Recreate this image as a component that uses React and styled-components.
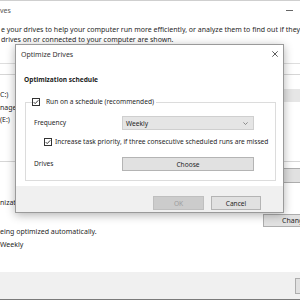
import React from "react"
import styled, { createGlobalStyle } from "styled-components"

const GlobalStyle = createGlobalStyle`
  html, body {
    margin: 0;
    padding: 0;
  }
  body {
    width: 300px;
    height: 300px;
    overflow: hidden;
    background: #fff;
    font-family: "Noto Sans", "Open Sans", sans-serif;
    font-size: 7px;
    color: #1f1f1f;
  }
`

const Screen = styled.div`
  position: relative;
  width: 300px;
  height: 300px;
  overflow: hidden;
`

/* background window */
const Window = styled.div`
  display: flex;
  flex-direction: column;
  height: 300px;
  box-sizing: border-box;
  border-top: 1px solid #cfcfcf;
`
const TitleBar = styled.div`
  height: 19px;
  display: flex;
  align-items: center;
  justify-content: space-between;
  color: #555;
`
const Minimize = styled.span`
  width: 7px;
  height: 1px;
  background: #666;
  margin-right: 7px;
`
const Desc = styled.div`
  padding: 5px 0 0 1px;
  line-height: 10px;
  white-space: nowrap;
  overflow: hidden;
`
const List = styled.div`
  margin-top: 18px;
  height: 99px;
  box-sizing: border-box;
  border-bottom: 1px solid #d6d6d6;
`
const ListHeader = styled.div`
  height: 10px;
  border-top: 1px solid #dedede;
  border-bottom: 1px solid #d6d6d6;
`
const ListBody = styled.div`
  padding-top: 14px;
`
const ListRow = styled.div`
  height: 12.5px;
  line-height: 12.5px;
  display: flex;
  justify-content: space-between;
`
const StatusCell = styled.span`
  width: 20px;
  background: ${(p) => (p.$busy ? "#e6e6e6" : "transparent")};
`
const ActionRow = styled.div`
  margin-top: 6px;
  display: flex;
  justify-content: flex-end;
`
const WinButton = styled.div`
  height: ${(p) => p.$h || 15}px;
  width: ${(p) => p.$w}px;
  box-sizing: border-box;
  background: #e1e1e1;
  border: 1px solid #adadad;
  border-right: none;
  display: flex;
  align-items: center;
  padding-left: ${(p) => p.$pad || 4}px;
  overflow: hidden;
  white-space: nowrap;
  color: #1f1f1f;
`
const SectionLabel = styled.div`
  margin-top: 15px;
  line-height: 10px;
`
const ScheduleRow = styled.div`
  margin-top: 6px;
  display: flex;
  justify-content: flex-end;
`
const InfoLine = styled.div`
  line-height: 10px;
  margin-top: ${(p) => p.$gap || 0}px;
`
const Footer = styled.div`
  margin-top: auto;
  height: 28px;
  box-sizing: border-box;
  background: #f0f0f0;
  border-bottom: 1px solid #7a7a7a;
  display: flex;
  justify-content: flex-end;
  align-items: center;
`

/* dialog */
const Dialog = styled.div`
  position: absolute;
  left: 15px;
  top: 44px;
  width: 269px;
  height: 169px;
  box-sizing: border-box;
  background: #fff;
  border: 1px solid #9a9a9a;
  box-shadow: 0 2px 9px rgba(0, 0, 0, 0.3);
  display: flex;
  flex-direction: column;
  font-size: 6.6px;
`
const DialogTitle = styled.div`
  height: 18px;
  display: flex;
  align-items: center;
  justify-content: space-between;
  padding: 0 5px 0 5px;
  color: #333;
  font-size: 7px;
`
const DialogBody = styled.div`
  padding: 12px 0 0 8px;
`
const Heading = styled.div`
  font-weight: bold;
  line-height: 10px;
`
const Group = styled.fieldset`
  margin: 12px 0 0 1px;
  width: 251px;
  box-sizing: border-box;
  border: 1px solid #dcdcdc;
  padding: 0 0 9px 8px;
`
const Legend = styled.legend`
  margin-left: -2px;
  padding: 0 2px 0 0;
  line-height: 10px;
  display: flex;
  align-items: center;
  gap: 6px;
  white-space: nowrap;
`
const Grid = styled.div`
  margin-top: 9px;
  display: grid;
  grid-template-columns: 88px 132px;
  align-items: center;
`
const Label = styled.span`
  line-height: 10px;
`
const Select = styled.div`
  height: 14px;
  box-sizing: border-box;
  background: #e5e5e5;
  border: 1px solid #cfcfcf;
  display: flex;
  align-items: center;
  justify-content: space-between;
  padding: 0 5px 0 3px;
`
const PriorityRow = styled.div`
  grid-column: 1 / -1;
  margin: 7px 0 10px 10px;
  line-height: 10px;
  display: flex;
  align-items: center;
  gap: 3px;
  white-space: nowrap;
`
const Button = styled.div`
  height: 14px;
  box-sizing: border-box;
  background: ${(p) => (p.$disabled ? "#cccccc" : "#e1e1e1")};
  border: 1px solid ${(p) => (p.$disabled ? "#bfbfbf" : "#b4b4b4")};
  color: ${(p) => (p.$disabled ? "#9c9c9c" : "#1f1f1f")};
  width: ${(p) => (p.$w ? p.$w + "px" : "auto")};
  display: flex;
  align-items: center;
  justify-content: center;
`
const DialogFooter = styled.div`
  margin-top: auto;
  height: 26px;
  background: #f0f0f0;
  display: flex;
  justify-content: flex-end;
  align-items: flex-end;
  gap: 7px;
  padding: 0 22px 2px 0;
  box-sizing: border-box;
`
const BoxIcon = styled.svg`
  flex-shrink: 0;
  display: block;
`

const CheckBox = () => (
  <BoxIcon width="8" height="8" viewBox="0 0 8 8">
    <rect x="0.5" y="0.5" width="7" height="7" fill="#fff" stroke="#333" />
    <path d="M1.7 4.1 L3.2 5.6 L6.3 2.3" fill="none" stroke="#222" strokeWidth="0.9" />
  </BoxIcon>
)

const CloseIcon = () => (
  <svg width="6" height="6" viewBox="0 0 6 6">
    <path d="M0.3 0.3 L5.7 5.7 M5.7 0.3 L0.3 5.7" stroke="#333" strokeWidth="0.8" />
  </svg>
)

const Chevron = () => (
  <svg width="5" height="3" viewBox="0 0 5 3">
    <path d="M0.4 0.4 L2.5 2.5 L4.6 0.4" fill="none" stroke="#666" strokeWidth="0.7" />
  </svg>
)

export default function App() {
  return (
    <Screen>
      <GlobalStyle />
      <Window>
        <TitleBar>
          <span>ves</span>
          <Minimize />
        </TitleBar>
        <Desc>
          <div>e your drives to help your computer run more efficiently, or analyze them to find out if they need</div>
          <div>drives on or connected to your computer are shown.</div>
        </Desc>
        <List>
          <ListHeader />
          <ListBody>
            <ListRow>
              <span>C:)</span>
              <StatusCell $busy />
            </ListRow>
            <ListRow>
              <span>nage</span>
              <StatusCell />
            </ListRow>
            <ListRow>
              <span>(E:)</span>
              <StatusCell />
            </ListRow>
          </ListBody>
        </List>
        <ActionRow>
          <WinButton $w={30} />
        </ActionRow>
        <SectionLabel>nizati</SectionLabel>
        <ScheduleRow>
          <WinButton $w={37} $h={13} $pad={18}>Chang</WinButton>
        </ScheduleRow>
        <InfoLine $gap={0}>eing optimized automatically.</InfoLine>
        <InfoLine $gap={3}>Weekly</InfoLine>
        <Footer>
          <WinButton $w={2} $h={16} />
        </Footer>
      </Window>

      <Dialog>
        <DialogTitle>
          <span>Optimize Drives</span>
          <CloseIcon />
        </DialogTitle>
        <DialogBody>
          <Heading>Optimization schedule</Heading>
          <Group>
            <Legend>
              <CheckBox />
              Run on a schedule (recommended)
            </Legend>
            <Grid>
              <Label>Frequency</Label>
              <Select>
                <span>Weekly</span>
                <Chevron />
              </Select>
              <PriorityRow>
                <CheckBox />
                Increase task priority, if three consecutive scheduled runs are missed
              </PriorityRow>
              <Label>Drives</Label>
              <Button>Choose</Button>
            </Grid>
          </Group>
        </DialogBody>
        <DialogFooter>
          <Button $disabled $w={51}>OK</Button>
          <Button $w={50}>Cancel</Button>
        </DialogFooter>
      </Dialog>
    </Screen>
  )
}
